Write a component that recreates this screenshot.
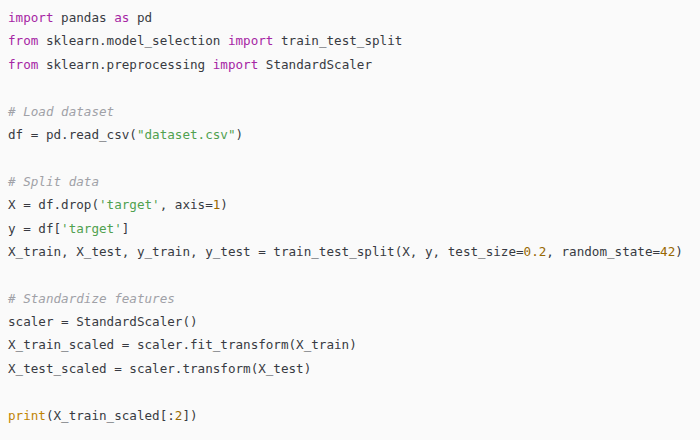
import React from "react";

type Tok = [string, string?];

const K = "text-[#a626a4]";
const S = "text-[#50a14f]";
const N = "text-[#986801]";
const C = "text-[#a0a1a7] italic";
const B = "text-[#c18401]";

const lines: Tok[][] = [
  [["import", K], [" pandas "], ["as", K], [" pd"]],
  [["from", K], [" sklearn.model_selection "], ["import", K], [" train_test_split"]],
  [["from", K], [" sklearn.preprocessing "], ["import", K], [" StandardScaler"]],
  [],
  [["# Load dataset", C]],
  [["df = pd.read_csv("], ['"dataset.csv"', S], [")"]],
  [],
  [["# Split data", C]],
  [["X = df.drop("], ["'target'", S], [", axis="], ["1", N], [")"]],
  [["y = df["], ["'target'", S], ["]"]],
  [
    ["X_train, X_test, y_train, y_test = train_test_split(X, y, test_size="],
    ["0.2", N],
    [", random_state="],
    ["42", N],
    [")"],
  ],
  [],
  [["# Standardize features", C]],
  [["scaler = StandardScaler()"]],
  [["X_train_scaled = scaler.fit_transform(X_train)"]],
  [["X_test_scaled = scaler.transform(X_test)"]],
  [],
  [["print", B], ["(X_train_scaled[:"], ["2", N], ["])"]],
];

export default function App() {
  return (
    <div className="w-[700px] h-[440px] bg-[#fafafa] overflow-hidden">
      <pre
        className="pl-[8px] pt-[6px] text-[12.6px] leading-[23.4px] text-[#383a42] whitespace-pre"
        style={{ fontFamily: '"DejaVu Sans Mono", "Liberation Mono", monospace' }}
      >
        {lines.map((line, i) => (
          <div key={i} className="h-[23.4px]">
            {line.length === 0
              ? " "
              : line.map(([text, cls], j) => (
                  <span key={j} className={cls}>
                    {text}
                  </span>
                ))}
          </div>
        ))}
      </pre>
    </div>
  );
}
